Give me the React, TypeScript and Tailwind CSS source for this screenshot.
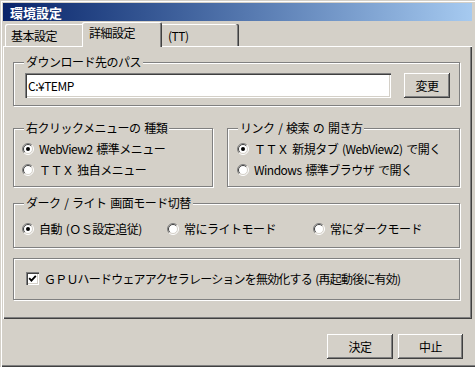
import type { ReactNode } from "react";

function Radio({ checked }: { checked?: boolean }) {
  return (
    <svg width="12" height="12" viewBox="0 0 12 12" className="shrink-0">
      <circle cx="6" cy="6" r="5" fill="#fff" />
      <path d="M2.1 9.9 A5.5 5.5 0 0 1 9.9 2.1" stroke="#808080" fill="none" />
      <path d="M2.8 9.2 A4.5 4.5 0 0 1 9.2 2.8" stroke="#404040" fill="none" />
      <path d="M9.9 2.1 A5.5 5.5 0 0 1 2.1 9.9" stroke="#ffffff" fill="none" />
      <path d="M9.2 2.8 A4.5 4.5 0 0 1 2.8 9.2" stroke="#d4d0c8" fill="none" />
      {checked && <circle cx="6" cy="6" r="2" fill="#000" />}
    </svg>
  );
}

function Checkbox({ checked }: { checked?: boolean }) {
  return (
    <div className="h-[13px] w-[13px] shrink-0 bg-white shadow-[inset_1px_1px_0_#808080,inset_2px_2px_0_#404040,inset_-1px_-1px_0_#fff,inset_-2px_-2px_0_#d4d0c8]">
      {checked && (
        <svg width="13" height="13" viewBox="0 0 13 13">
          <path d="M3.2 6.2 L5.4 8.6 L9.8 3.8" stroke="#000" strokeWidth="1.8" fill="none" />
        </svg>
      )}
    </div>
  );
}

function Button({ label, w }: { label: string; w: string }) {
  return (
    <button
      className={`flex h-[25px] ${w} items-center justify-center bg-[#d4d0c8] text-[12px] text-black shadow-[inset_-1px_-1px_0_#404040,inset_1px_1px_0_#fff,inset_-2px_-2px_0_#808080,inset_2px_2px_0_#d4d0c8]`}
    >
      {label}
    </button>
  );
}

function Group({ label, className, children }: { label?: string; className: string; children: ReactNode }) {
  return (
    <div
      className={`relative border border-[#808080] shadow-[inset_1px_1px_0_#fff,1px_1px_0_#fff] ${className}`}
    >
      {label && (
        <span className="absolute -top-[9px] left-[10px] bg-[#d4d0c8] px-[2px] text-[12px] leading-[16px] text-black">
          {label}
        </span>
      )}
      {children}
    </div>
  );
}

function Option({ checked, children }: { checked?: boolean; children: ReactNode }) {
  return (
    <div className="flex h-[21px] items-center gap-[5px] whitespace-nowrap">
      <Radio checked={checked} />
      <span>{children}</span>
    </div>
  );
}

export default function App() {
  return (
    <div className="flex h-[367px] w-[475px] flex-col overflow-hidden bg-[#d4d0c8] px-[3px] pt-[3px] font-['Noto_Sans_CJK_JP',sans-serif] text-[12px] leading-none tracking-[-0.5px] text-black [word-spacing:1.5px] shadow-[inset_1px_1px_0_#d4d0c8,inset_2px_2px_0_#fff,inset_0_-1px_0_#404040,inset_0_-2px_0_#808080]">
      <div className="flex h-[18px] items-center bg-gradient-to-r from-[#0a246a] to-[#a6caf0] pl-[7px] text-[13px] font-bold tracking-normal text-white">
        環境設定
      </div>

      <div className="mt-[1px] flex h-[24px] items-end pl-[2px]">
        <div className="flex h-[22px] w-[77px] items-start rounded-tl-[2px] pl-[6px] pt-[6px] shadow-[inset_1px_1px_0_#fff]">
          基本設定
        </div>
        <div className="relative z-10 -mb-px flex h-[25px] w-[80px] items-start rounded-t-[2px] bg-[#d4d0c8] pl-[7px] pt-[5px] shadow-[inset_1px_1px_0_#fff,inset_-1px_0_0_#404040,inset_-2px_0_0_#808080]">
          詳細設定
        </div>
        <div className="flex h-[22px] w-[77px] items-start rounded-tr-[2px] pl-[6px] pt-[6px] shadow-[inset_-1px_0_0_#404040,inset_-2px_0_0_#808080,inset_0_1px_0_#fff]">
          (TT)
        </div>
      </div>

      <div className="flex h-[273px] w-[469px] flex-col pl-[10px] pt-[16px] shadow-[inset_1px_1px_0_#fff,inset_-1px_-1px_0_#404040,inset_-2px_-2px_0_#808080]">
        <Group label="ダウンロード先のパス" className="h-[44px] w-[447px]">
          <div className="flex pl-[11px] pt-[10px]">
            <div className="flex h-[25px] w-[366px] items-center bg-white pl-[3px] shadow-[inset_1px_1px_0_#808080,inset_2px_2px_0_#404040,inset_-1px_-1px_0_#fff,inset_-2px_-2px_0_#d4d0c8]">
              C:¥TEMP
            </div>
            <div className="ml-[13px]">
              <Button label="変更" w="w-[46px]" />
            </div>
          </div>
        </Group>

        <div className="mt-[22px] flex gap-[14px]">
          <Group label="右クリックメニューの 種類" className="h-[59px] w-[200px]">
            <div className="flex flex-col pl-[8px] pt-[9px]">
              <Option checked>WebView2 標準メニュー</Option>
              <Option>ＴＴＸ 独自メニュー</Option>
            </div>
          </Group>
          <Group label="リンク / 検索 の 開き方" className="h-[59px] w-[233px]">
            <div className="flex flex-col pl-[9px] pt-[9px]">
              <Option checked>ＴＴＸ 新規タブ (WebView2) で開く</Option>
              <Option>Windows 標準ブラウザ で開く</Option>
            </div>
          </Group>
        </div>

        <Group label="ダーク / ライト 画面モード切替" className="mt-[16px] h-[45px] w-[447px]">
          <div className="grid grid-cols-[145px_146px_1fr] pl-[8px] pt-[14px]">
            <Option checked>自動 (ＯＳ設定追従)</Option>
            <Option>常にライトモード</Option>
            <Option>常にダークモード</Option>
          </div>
        </Group>

        <Group className="mt-[10px] h-[42px] w-[447px]">
          <div className="mt-[9px] flex h-[21px] items-center gap-[5px] whitespace-nowrap pl-[12px]">
            <Checkbox checked />
            <span className="tracking-[-0.8px]">
              ＧＰＵハードウェアアクセラレーションを無効化する (再起動後に有効)
            </span>
          </div>
        </Group>
      </div>

      <div className="mt-[15px] flex justify-end gap-[5px] pr-[9px]">
        <Button label="決定" w="w-[66px]" />
        <Button label="中止" w="w-[65px]" />
      </div>
    </div>
  );
}
